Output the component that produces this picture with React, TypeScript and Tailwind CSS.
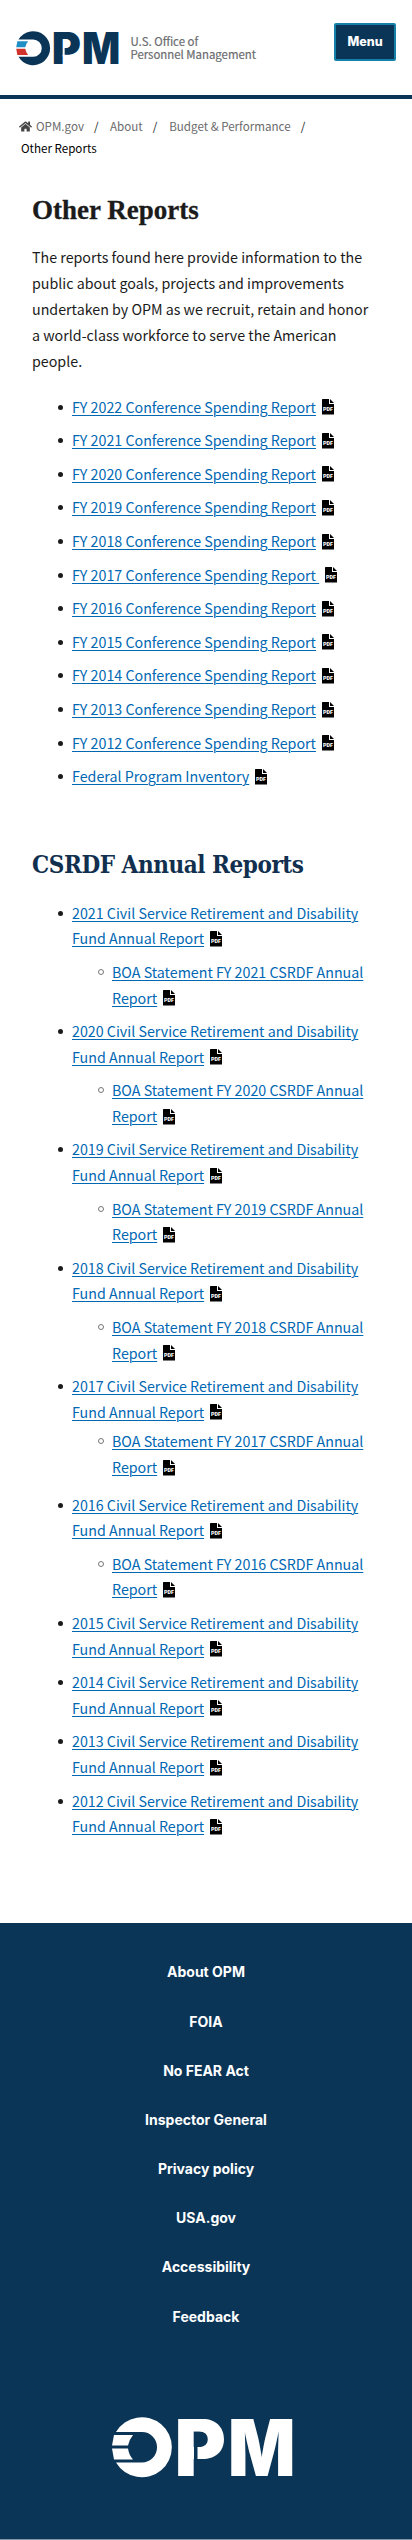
import React from "react";
import { FaHome } from "react-icons/fa";

function Logo({ className, tone, top, bottom, gap }: { className: string; tone: string; top: string; bottom: string; gap: string }) {
  return (
    <svg viewBox="0 0 181 60" overflow="visible" className={className} role="img" aria-label="OPM">
      <path d="M4 15A30 30 0 1 1 4 45.5H30A15 15.2 0 0 0 30 15Z" fill={tone} />
      <path d="M2 18H21Q17 23 16 28.500H0Z" fill={top} />
      <path d="M0 31.500H16Q17 38 21 42.500H2Z" fill={bottom} />
      <g fill={tone} fontFamily="Inter" fontWeight="900" fontSize="78.4">
        <text transform="translate(62.5 58.500) scale(1 1)">P</text>
        <text transform="translate(116 58.500) scale(0.9 1)">M</text>
      </g>
      <rect x="82" y="30" width="3.500" height="15" fill={gap} />
    </svg>
  );
}

function PdfIcon() {
  return (
    <svg viewBox="0 0 12 16" className="inline-block ml-[6px] w-3 h-4 -mt-[3px] align-middle">
      <path d="M0.500 0H7V5H12V15.500H0V0.500ZM8 0L12 4H8Z" fill="#000" />
      <text x="1" y="11.500" fontFamily="Roboto" fontWeight="900" fontSize="6" fill="#fff" textLength="10" lengthAdjust="spacingAndGlyphs">PDF</text>
    </svg>
  );
}

function ReportLink({ children }: { children: string }) {
  return (
    <>
      <a href="#" className="text-[#0067b3] underline decoration-1 underline-offset-2">{children}</a>
      <PdfIcon />
    </>
  );
}

function Disc() {
  return <span className="mt-[11px] mr-[9px] size-[5px] shrink-0 rounded-full bg-[#1b1b1b]" />;
}

const conference = ["FY 2022", "FY 2021", "FY 2020", "FY 2019", "FY 2018", "FY 2017", "FY 2016", "FY 2015", "FY 2014", "FY 2013", "FY 2012"];
const annual = [2021, 2020, 2019, 2018, 2017, 2016, 2015, 2014, 2013, 2012];
const footerLinks = ["About OPM", "FOIA", "No FEAR Act", "Inspector General", "Privacy policy", "USA.gov", "Accessibility", "Feedback"];

export default function App() {
  return (
    <div className="min-h-[2540px] w-[412px] bg-white font-['Noto_Sans_CJK_SC',sans-serif] text-[14.25px] leading-[25.6px] text-[#1b1b1b]">
      <header className="flex h-[99px] items-start border-b-4 border-[#0a3557] pl-4">
        <Logo className="mt-[30.5px] h-[34px] w-[103px] shrink-0" tone="#0a3557" top="#1f8fc6" bottom="#d0342c" gap="#fff" />
        <div className="mt-[35px] ml-[11.5px] text-[11.4px] leading-[13px] whitespace-nowrap text-[#6b6c6f] [-webkit-text-stroke:0.2px_#6b6c6f]">
          U.S. Office of
          <br />
          Personnel Management
        </div>
        <button className="mt-[23px] ml-auto mr-4 h-[38px] w-[62px] rounded-[2px] border-2 border-[#1681a8] bg-[#0a3557] font-[Inter] text-[12.5px] font-extrabold text-white">Menu</button>
      </header>

      <nav className="pt-[16px] pl-[19px] text-[11.6px] leading-[22px] text-[#6b6b6b]">
        <div className="flex items-center whitespace-pre">
          <FaHome className="mr-1 size-[13px] shrink-0 text-[#454545]" />
          <span>OPM.gov</span>
          <span className="mr-[11.5px] ml-[10px] text-[#1b1b1b]">/</span>
          <span>About</span>
          <span className="mr-[12px] ml-[10px] text-[#1b1b1b]">/</span>
          <span>{"Budget & Performance"}</span>
          <span className="ml-[10px] text-[#1b1b1b]">/</span>
        </div>
        <div className="pl-[2px] text-[#000]">Other Reports</div>
      </nav>

      <main className="px-8">
        <h1 className="mt-[36px] h-[30px] font-['Liberation_Serif',serif] text-[27px] leading-[30px] font-bold whitespace-nowrap [-webkit-text-stroke:0.3px_#1b1b1b]">Other Reports</h1>
        <p className="mt-[19px] leading-[25.92px]">
          The reports found here provide information to the
          <br />
          public about goals, projects and improvements
          <br />
          undertaken by OPM as we recruit, retain and honor
          <br />
          a world-class workforce to serve the American
          <br />
          people.
        </p>
        <ul className="mt-[20px] flex flex-col gap-2 pl-[26px]">
          {conference.map((year) => (
            <li key={year} className="flex h-[25.6px] whitespace-pre">
              <Disc />
              <div><ReportLink>{year + " Conference Spending Report" + (year === "FY 2017" ? "\u00a0" : "")}</ReportLink></div>
            </li>
          ))}
          <li className="flex h-[25.6px]">
            <Disc />
            <div><ReportLink>Federal Program Inventory</ReportLink></div>
          </li>
        </ul>

        <h2 className="mt-[58px] h-[36px] font-['DejaVu_Serif_Condensed','DejaVu_Serif',serif] text-[24px] leading-[36px] font-bold tracking-[-0.45px] whitespace-nowrap text-[#112f4e]">CSRDF Annual Reports</h2>
        <ul className="mt-[17px] flex flex-col gap-2 pl-[26px]">
          {annual.map((year) => (
            <li key={year} className="flex">
              <Disc />
              <div className="w-[300px]">
                <div className="h-[51.2px]"><ReportLink>{year + " Civil Service Retirement and Disability Fund Annual Report"}</ReportLink></div>
                {year > 2015 && (
                  <div className={year === 2017 ? "mt-1 mb-1 flex h-[51.2px] pl-[26px]" : "mt-2 flex h-[51.2px] pl-[26px]"}>
                    <span className="mt-[10px] mr-[8px] size-[6px] shrink-0 rounded-full border border-[#777]" />
                    <div className="w-[262px]"><ReportLink>{"BOA Statement FY " + year + " CSRDF Annual Report"}</ReportLink></div>
                  </div>
                )}
              </div>
            </li>
          ))}
        </ul>
      </main>

      <footer className="mt-[84px] flex h-[617px] flex-col items-center border-b border-[#7f97ab] bg-[#0a3557] pt-[25px]">
        {footerLinks.map((label) => (
          <a key={label} href="#" className="flex h-[49.2px] items-center font-[Inter] text-[14px] leading-[14px] font-bold text-white">{label}</a>
        ))}
        <Logo className="mt-[76px] -ml-[7px] h-[60px] w-[181px] shrink-0" tone="#fff" top="#fff" bottom="#fff" gap="#0a3557" />
      </footer>
    </div>
  );
}
